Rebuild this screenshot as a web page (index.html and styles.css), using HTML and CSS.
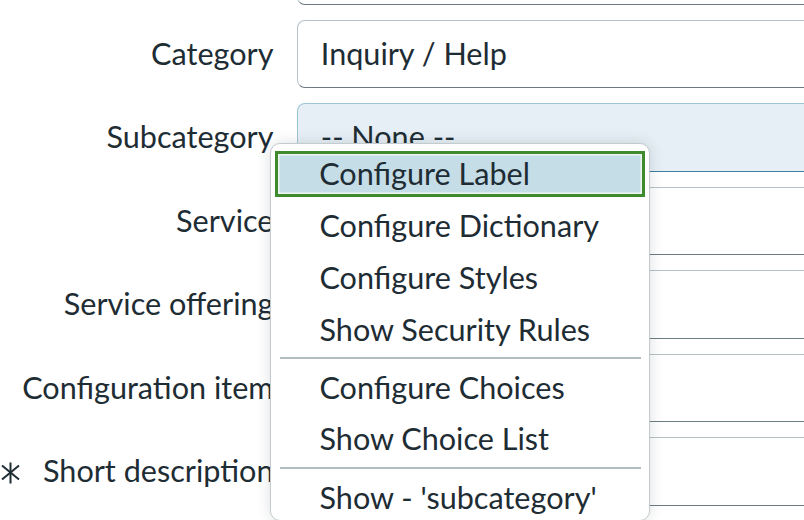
FILE: index.html
```html
<!DOCTYPE html>
<html lang="en">
<head>
<meta charset="utf-8">
<title>Incident form - context menu</title>
<link rel="stylesheet" href="styles.css">
</head>
<body>
<div class="page">
  <div class="form">
    <div class="row">
      <div class="label"></div>
      <div class="field"></div>
    </div>
    <div class="row">
      <div class="label">Category</div>
      <div class="field"><span class="value">Inquiry / Help</span></div>
    </div>
    <div class="row">
      <div class="label">Subcategory</div>
      <div class="field field-focus"><span class="value">-- None --</span></div>
    </div>
    <div class="row">
      <div class="label">Service</div>
      <div class="field"></div>
    </div>
    <div class="row">
      <div class="label">Service offering</div>
      <div class="field"></div>
    </div>
    <div class="row">
      <div class="label">Configuration item</div>
      <div class="field"></div>
    </div>
    <div class="row">
      <div class="label label-required">
        <svg class="req" viewBox="0 0 19 22" width="19" height="22" aria-hidden="true">
          <line x1="9.5" y1="0.5" x2="9.5" y2="21.5"/>
          <line x1="1" y1="3.6" x2="18" y2="17.6"/>
          <line x1="1" y1="17.6" x2="18" y2="3.6"/>
        </svg>
        <span>Short description</span>
      </div>
      <div class="field"></div>
    </div>
  </div>

  <div class="menu" role="menu">
    <div class="item active" role="menuitem">Configure Label</div>
    <div class="item" role="menuitem">Configure Dictionary</div>
    <div class="item" role="menuitem">Configure Styles</div>
    <div class="item" role="menuitem">Show Security Rules</div>
    <div class="sep"></div>
    <div class="item" role="menuitem">Configure Choices</div>
    <div class="item" role="menuitem">Show Choice List</div>
    <div class="sep"></div>
    <div class="item" role="menuitem">Show - 'subcategory'</div>
  </div>
</div>
</body>
</html>
```

FILE: styles.css
```css
html, body {
  margin: 0;
  padding: 0;
  background: #ffffff;
}

body {
  width: 804px;
  height: 520px;
  overflow: hidden;
  font-family: Lato, "Noto Sans", "Liberation Sans", sans-serif;
  font-size: 30.6px;
  color: #1e2c34;
}

.page {
  position: relative;
  width: 804px;
  height: 520px;
  overflow: hidden;
}

.form {
  display: flex;
  flex-direction: column;
  gap: 15px;
  margin-top: -64.1px;
}

.row {
  display: grid;
  grid-template-columns: 273.5px 1fr;
  column-gap: 23.8px;
  align-items: center;
  height: 68.6px;
}

.label {
  text-align: right;
  white-space: nowrap;
  line-height: 1;
}

.label-required {
  display: flex;
  align-items: center;
  justify-content: flex-end;
  gap: 23px;
}

.req {
  display: block;
  flex-shrink: 0;
  width: 19px;
  height: 22px;
  stroke: #1e2c34;
  stroke-width: 2;
  fill: none;
  margin-top: 2px;
}

.field {
  box-sizing: border-box;
  height: 68.6px;
  margin-right: -40px;
  border: 1.5px solid #b6c2c8;
  border-bottom: 1.8px solid #6c7b83;
  border-radius: 8px;
  background: #ffffff;
  display: flex;
  align-items: center;
  padding-left: 22.5px;
}

.field-focus {
  background: #e6eff5;
  border-color: #9ec5d7;
  border-bottom-color: #3a7ea2;
}

.value {
  line-height: 1;
  white-space: nowrap;
}

.menu {
  position: absolute;
  left: 270px;
  top: 142.7px;
  width: 380px;
  height: 378px;
  box-sizing: border-box;
  background: #ffffff;
  border: 1.5px solid #c3cbcf;
  border-radius: 10px;
  box-shadow: 0 0 14px rgba(40, 55, 65, 0.16);
  padding-top: 4.7px;
  display: flex;
  flex-direction: column;
}

.item {
  box-sizing: border-box;
  height: 51.6px;
  margin: 0 4.2px;
  padding-left: 44.3px;
  padding-top: 2px;
  display: flex;
  align-items: center;
  white-space: nowrap;
  line-height: 1;
  flex-shrink: 0;
}

.item.active {
  height: 46px;
  margin: 2.8px 4.2px;
  padding-left: 41px;
  padding-top: 0;
  border: 3.3px solid #3f8a2c;
  background: #c5dde7;
  box-shadow: inset 0 0 0 1.5px #eef4ef;
}

.sep {
  height: 2px;
  margin: 2.3px 8.5px;
  background: #b1bdc3;
  flex-shrink: 0;
}
```
